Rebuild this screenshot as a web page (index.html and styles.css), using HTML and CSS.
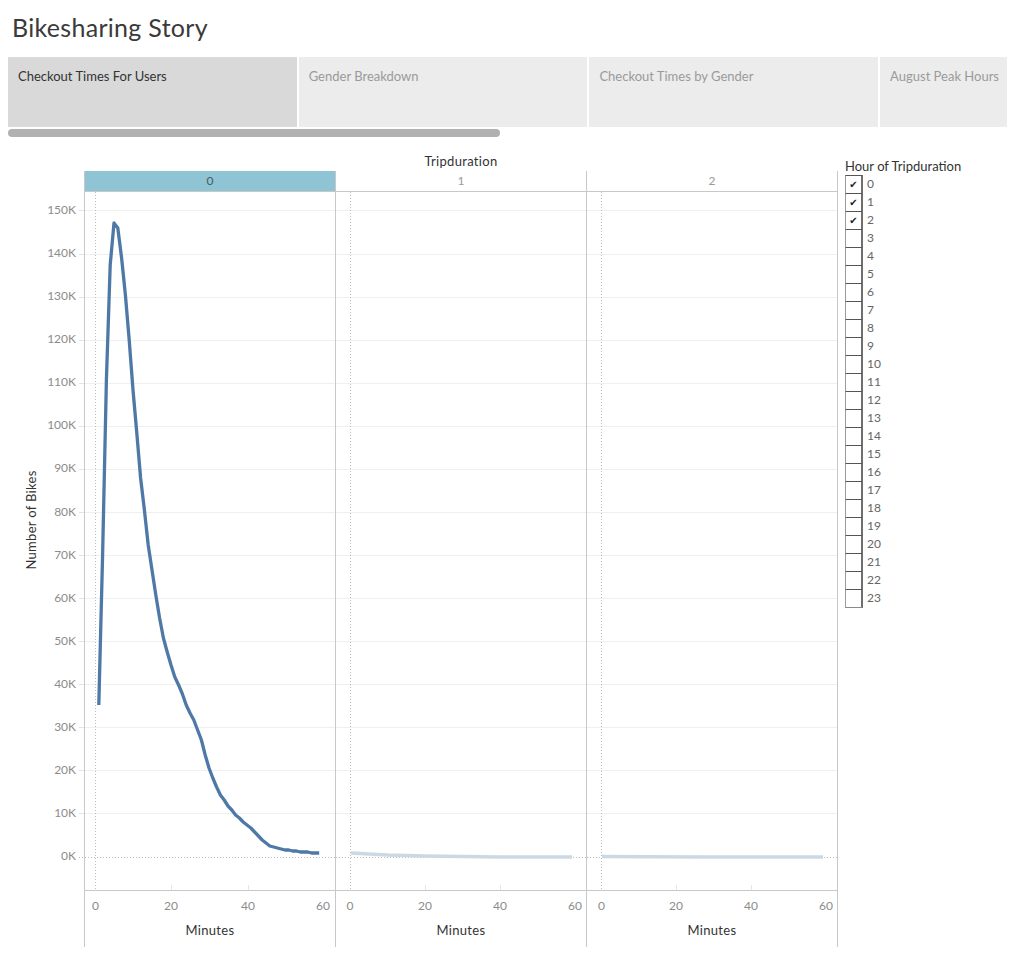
FILE: index.html
```html
<!DOCTYPE html>
<html>
<head>
<meta charset="utf-8">
<link rel="stylesheet" href="styles.css">
</head>
<body>
<div class="page">
  <h1 class="title">Bikesharing Story</h1>
  <div class="tabs">
    <div class="tab active">Checkout Times For Users</div>
    <div class="tab">Gender Breakdown</div>
    <div class="tab">Checkout Times by Gender</div>
    <div class="tab last">August Peak Hours</div>
  </div>
  <div class="scroll"><div class="thumb"></div></div>

  <div class="viz">
    <div class="chart">
      <div class="chart-title">Tripduration</div>
      <svg class="yaxis" width="76" height="776" viewBox="0 0 76 776">
        <text class="axis-title" transform="translate(25 349) rotate(-90)" text-anchor="middle" dominant-baseline="middle">Number of Bikes</text>
        <g class="ylabels" text-anchor="end" dominant-baseline="middle">
          <text x="68" y="686">0K</text>
          <text x="68" y="643">10K</text>
          <text x="68" y="600">20K</text>
          <text x="68" y="557">30K</text>
          <text x="68" y="514">40K</text>
          <text x="68" y="471">50K</text>
          <text x="68" y="428">60K</text>
          <text x="68" y="385">70K</text>
          <text x="68" y="342">80K</text>
          <text x="68" y="298">90K</text>
          <text x="68" y="255">100K</text>
          <text x="68" y="212">110K</text>
          <text x="68" y="169">120K</text>
          <text x="68" y="126">130K</text>
          <text x="68" y="83">140K</text>
          <text x="68" y="40">150K</text>
        </g>
        <g class="yticks">
          <line x1="71" x2="76" y1="642.5" y2="642.5"/>
          <line x1="71" x2="76" y1="599.5" y2="599.5"/>
          <line x1="71" x2="76" y1="556.5" y2="556.5"/>
          <line x1="71" x2="76" y1="513.5" y2="513.5"/>
          <line x1="71" x2="76" y1="470.5" y2="470.5"/>
          <line x1="71" x2="76" y1="427.5" y2="427.5"/>
          <line x1="71" x2="76" y1="384.5" y2="384.5"/>
          <line x1="71" x2="76" y1="341.5" y2="341.5"/>
          <line x1="71" x2="76" y1="298.5" y2="298.5"/>
          <line x1="71" x2="76" y1="255.5" y2="255.5"/>
          <line x1="71" x2="76" y1="212.5" y2="212.5"/>
          <line x1="71" x2="76" y1="169.5" y2="169.5"/>
          <line x1="71" x2="76" y1="126.5" y2="126.5"/>
          <line x1="71" x2="76" y1="83.5" y2="83.5"/>
          <line x1="71" x2="76" y1="39.5" y2="39.5"/>
        </g>
        <line class="zero" x1="71" x2="76" y1="686.5" y2="686.5"/>
      </svg>

      <div class="panes">
        <div class="pane">
          <div class="pane-head selected">0</div>
          <svg class="plot" width="250" height="698" viewBox="0 0 250 698">
            <g class="grid">
              <line x1="0" x2="250" y1="621.5" y2="621.5"/><line x1="0" x2="250" y1="578.5" y2="578.5"/>
              <line x1="0" x2="250" y1="535.5" y2="535.5"/><line x1="0" x2="250" y1="492.5" y2="492.5"/>
              <line x1="0" x2="250" y1="449.5" y2="449.5"/><line x1="0" x2="250" y1="406.5" y2="406.5"/>
              <line x1="0" x2="250" y1="363.5" y2="363.5"/><line x1="0" x2="250" y1="320.5" y2="320.5"/>
              <line x1="0" x2="250" y1="277.5" y2="277.5"/><line x1="0" x2="250" y1="234.5" y2="234.5"/>
              <line x1="0" x2="250" y1="191.5" y2="191.5"/><line x1="0" x2="250" y1="148.5" y2="148.5"/>
              <line x1="0" x2="250" y1="105.5" y2="105.5"/><line x1="0" x2="250" y1="62.5" y2="62.5"/>
              <line x1="0" x2="250" y1="18.5" y2="18.5"/>
            </g>
            <line class="zero" x1="0" x2="250" y1="665.5" y2="665.5"/>
            <line class="zero" x1="10.5" x2="10.5" y1="0" y2="698"/>
            <g class="xticks">
              <line x1="86.5" x2="86.5" y1="693" y2="698"/><line x1="163.5" x2="163.5" y1="693" y2="698"/>
            </g>
            <polyline class="line main" points="13.8,513 17.6,363 21.4,188 25.2,73 29,31 32.8,36 36.6,66 40.4,103 44.2,148 48,198 51.8,241 55.6,286 59.4,318 63.2,353 67,378 70.8,403 74.6,426 78.4,446 82.2,460 86,473 89.8,485 93.6,493 97.4,502 101.2,513 105,521 108.8,528 112.6,538 116.4,548 120.2,563 124,576 127.8,586 131.6,595 135.4,603 139.2,608 143,614 146.8,618 150.6,623 154.4,626 158.2,630 162,633 165.8,636 169.6,640 173.4,644 177.2,648 181,651 184.8,654 188.6,655 192.4,656 196.2,657 200,658 203.8,658 207.6,659 211.4,659 215.2,660 219,660 222.8,660 226.6,661 230.4,661 234.2,661"/>
          </svg>
          <svg class="xaxis" width="250" height="56" viewBox="0 0 250 56">
            <g class="xlabels" text-anchor="middle" dominant-baseline="middle">
              <text x="10.5" y="16">0</text><text x="86" y="16">20</text><text x="163" y="16">40</text><text x="238" y="16">60</text>
            </g>
            <text class="axis-title" x="125" y="41" text-anchor="middle" dominant-baseline="middle">Minutes</text>
          </svg>
        </div>

        <div class="pane">
          <div class="pane-head">1</div>
          <svg class="plot" width="250" height="698" viewBox="0 0 250 698">
            <g class="grid">
              <line x1="0" x2="250" y1="621.5" y2="621.5"/><line x1="0" x2="250" y1="578.5" y2="578.5"/>
              <line x1="0" x2="250" y1="535.5" y2="535.5"/><line x1="0" x2="250" y1="492.5" y2="492.5"/>
              <line x1="0" x2="250" y1="449.5" y2="449.5"/><line x1="0" x2="250" y1="406.5" y2="406.5"/>
              <line x1="0" x2="250" y1="363.5" y2="363.5"/><line x1="0" x2="250" y1="320.5" y2="320.5"/>
              <line x1="0" x2="250" y1="277.5" y2="277.5"/><line x1="0" x2="250" y1="234.5" y2="234.5"/>
              <line x1="0" x2="250" y1="191.5" y2="191.5"/><line x1="0" x2="250" y1="148.5" y2="148.5"/>
              <line x1="0" x2="250" y1="105.5" y2="105.5"/><line x1="0" x2="250" y1="62.5" y2="62.5"/>
              <line x1="0" x2="250" y1="18.5" y2="18.5"/>
            </g>
            <line class="zero" x1="0" x2="250" y1="665.5" y2="665.5"/>
            <line class="zero" x1="14.5" x2="14.5" y1="0" y2="698"/>
            <g class="xticks">
              <line x1="89.5" x2="89.5" y1="693" y2="698"/><line x1="164.5" x2="164.5" y1="693" y2="698"/>
            </g>
            <polyline class="line faint" points="15,661 33,662 52,663 70,663.5 89,664 127,664.5 164,665 200,665 236,665"/>
          </svg>
          <svg class="xaxis" width="250" height="56" viewBox="0 0 250 56">
            <g class="xlabels" text-anchor="middle" dominant-baseline="middle">
              <text x="14" y="16">0</text><text x="89" y="16">20</text><text x="164" y="16">40</text><text x="239" y="16">60</text>
            </g>
            <text class="axis-title" x="125" y="41" text-anchor="middle" dominant-baseline="middle">Minutes</text>
          </svg>
        </div>

        <div class="pane last">
          <div class="pane-head">2</div>
          <svg class="plot" width="250" height="698" viewBox="0 0 250 698">
            <g class="grid">
              <line x1="0" x2="250" y1="621.5" y2="621.5"/><line x1="0" x2="250" y1="578.5" y2="578.5"/>
              <line x1="0" x2="250" y1="535.5" y2="535.5"/><line x1="0" x2="250" y1="492.5" y2="492.5"/>
              <line x1="0" x2="250" y1="449.5" y2="449.5"/><line x1="0" x2="250" y1="406.5" y2="406.5"/>
              <line x1="0" x2="250" y1="363.5" y2="363.5"/><line x1="0" x2="250" y1="320.5" y2="320.5"/>
              <line x1="0" x2="250" y1="277.5" y2="277.5"/><line x1="0" x2="250" y1="234.5" y2="234.5"/>
              <line x1="0" x2="250" y1="191.5" y2="191.5"/><line x1="0" x2="250" y1="148.5" y2="148.5"/>
              <line x1="0" x2="250" y1="105.5" y2="105.5"/><line x1="0" x2="250" y1="62.5" y2="62.5"/>
              <line x1="0" x2="250" y1="18.5" y2="18.5"/>
            </g>
            <line class="zero" x1="0" x2="250" y1="665.5" y2="665.5"/>
            <line class="zero" x1="14.5" x2="14.5" y1="0" y2="698"/>
            <g class="xticks">
              <line x1="89.5" x2="89.5" y1="693" y2="698"/><line x1="164.5" x2="164.5" y1="693" y2="698"/>
            </g>
            <polyline class="line faint" points="15,664.5 60,664.8 120,665 180,665 236,665"/>
          </svg>
          <svg class="xaxis" width="250" height="56" viewBox="0 0 250 56">
            <g class="xlabels" text-anchor="middle" dominant-baseline="middle">
              <text x="14.5" y="16">0</text><text x="89" y="16">20</text><text x="164" y="16">40</text><text x="239" y="16">60</text>
            </g>
            <text class="axis-title" x="125" y="41" text-anchor="middle" dominant-baseline="middle">Minutes</text>
          </svg>
        </div>
      </div>
    </div>

    <div class="legend">
      <div class="legend-title">Hour of Tripduration</div>
      <ul class="legend-list">
        <li><span class="box"><span class="check">✔</span></span><span class="lbl">0</span></li>
        <li><span class="box"><span class="check">✔</span></span><span class="lbl">1</span></li>
        <li><span class="box"><span class="check">✔</span></span><span class="lbl">2</span></li>
        <li><span class="box"></span><span class="lbl">3</span></li>
        <li><span class="box"></span><span class="lbl">4</span></li>
        <li><span class="box"></span><span class="lbl">5</span></li>
        <li><span class="box"></span><span class="lbl">6</span></li>
        <li><span class="box"></span><span class="lbl">7</span></li>
        <li><span class="box"></span><span class="lbl">8</span></li>
        <li><span class="box"></span><span class="lbl">9</span></li>
        <li><span class="box"></span><span class="lbl">10</span></li>
        <li><span class="box"></span><span class="lbl">11</span></li>
        <li><span class="box"></span><span class="lbl">12</span></li>
        <li><span class="box"></span><span class="lbl">13</span></li>
        <li><span class="box"></span><span class="lbl">14</span></li>
        <li><span class="box"></span><span class="lbl">15</span></li>
        <li><span class="box"></span><span class="lbl">16</span></li>
        <li><span class="box"></span><span class="lbl">17</span></li>
        <li><span class="box"></span><span class="lbl">18</span></li>
        <li><span class="box"></span><span class="lbl">19</span></li>
        <li><span class="box"></span><span class="lbl">20</span></li>
        <li><span class="box"></span><span class="lbl">21</span></li>
        <li><span class="box"></span><span class="lbl">22</span></li>
        <li class="last"><span class="box"></span><span class="lbl">23</span></li>
      </ul>
    </div>
  </div>
</div>
</body>
</html>
```

FILE: styles.css
```css
html, body {
  margin: 0;
  padding: 0;
  background: #fff;
}

body {
  font-family: Lato, "Open Sans", "Liberation Sans", sans-serif;
  color: #333;
}

.page {
  padding: 0 8px;
}

.title {
  margin: 0;
  padding: 12px 0 0 4px;
  font-size: 25px;
  line-height: 30px;
  font-weight: normal;
  color: #3a3a3a;
  letter-spacing: 0.3px;
}

.tabs {
  display: flex;
  gap: 2px;
  margin-top: 15px;
  height: 70px;
}

.tab {
  width: 289px;
  box-sizing: border-box;
  padding: 11px 0 0 10px;
  background: #ececec;
  color: #9a9a9a;
  font-size: 13px;
  line-height: 16px;
}

.tab.active {
  background: #d9d9d9;
  color: #333;
}

.tab.last {
  width: 127px;
}

.scroll {
  margin-top: 2px;
  height: 8px;
}

.thumb {
  width: 492px;
  height: 8px;
  border-radius: 4px;
  background: #b1b1b1;
}

.viz {
  display: flex;
  margin-top: 15px;
}

.chart {
  display: grid;
  grid-template-columns: 76px 754px;
  grid-template-rows: 19px auto;
}

.chart-title {
  grid-column: 2;
  grid-row: 1;
  text-align: center;
  font-size: 13px;
  line-height: 19px;
  letter-spacing: 0.3px;
  color: #333;
}

.yaxis {
  grid-column: 1;
  grid-row: 2;
  display: block;
}

.panes {
  grid-column: 2;
  grid-row: 2;
  display: flex;
}

.pane {
  display: flex;
  flex-direction: column;
  border-left: 1px solid #c8c8c8;
}

.pane.last {
  border-right: 1px solid #c8c8c8;
}

.pane-head {
  height: 20px;
  line-height: 20px;
  border-bottom: 1px solid #c8c8c8;
  text-align: center;
  font-size: 12px;
  color: #9a9a9a;
}

.pane-head.selected {
  background: #8ec4d3;
  color: #4a5a60;
}

.plot {
  display: block;
  border-bottom: 1px solid #c8c8c8;
}

.xaxis {
  display: block;
}

.grid line {
  stroke: #efefef;
  stroke-width: 1;
}

.zero {
  stroke: #bdbdbd;
  stroke-width: 1;
  stroke-dasharray: 1 2;
}

.yticks line,
.xticks line {
  stroke: #e4e4e4;
  stroke-width: 1;
}

.line {
  fill: none;
  stroke-linejoin: round;
  stroke-linecap: butt;
}

.line.main {
  stroke: #4e79a7;
  stroke-width: 3.3;
}

.line.faint {
  stroke: #ccd9e5;
  stroke-width: 3.5;
}

.ylabels text,
.xlabels text {
  font-family: Lato, "Open Sans", "Liberation Sans", sans-serif;
  font-size: 12px;
  fill: #8c8c8c;
}

.axis-title {
  font-family: Lato, "Open Sans", "Liberation Sans", sans-serif;
  font-size: 13px;
  letter-spacing: 0.3px;
  fill: #333;
}

.legend {
  width: 170px;
  padding-left: 7px;
  box-sizing: border-box;
}

.legend-title {
  padding-top: 6px;
  font-size: 13px;
  line-height: 16px;
  color: #333;
}

.legend-list {
  list-style: none;
  margin: 1px 0 0 0;
  padding: 0;
}

.legend-list li {
  display: flex;
  align-items: flex-start;
  height: 18px;
}

.box {
  display: flex;
  align-items: center;
  justify-content: center;
  box-sizing: border-box;
  width: 18px;
  height: 18px;
  border-top: 1px solid #555;
  border-left: 1px solid #9a9a9a;
  border-right: 2px solid #6e6e6e;
  background: #fff;
}

.legend-list li.last .box {
  height: 19px;
  border-bottom: 1px solid #8a8a8a;
}

.check {
  font-family: "DejaVu Sans", sans-serif;
  font-size: 10px;
  line-height: 10px;
  color: #1e1e1e;
}

.lbl {
  margin-left: 4px;
  font-size: 12px;
  line-height: 18px;
  color: #666;
}
```
